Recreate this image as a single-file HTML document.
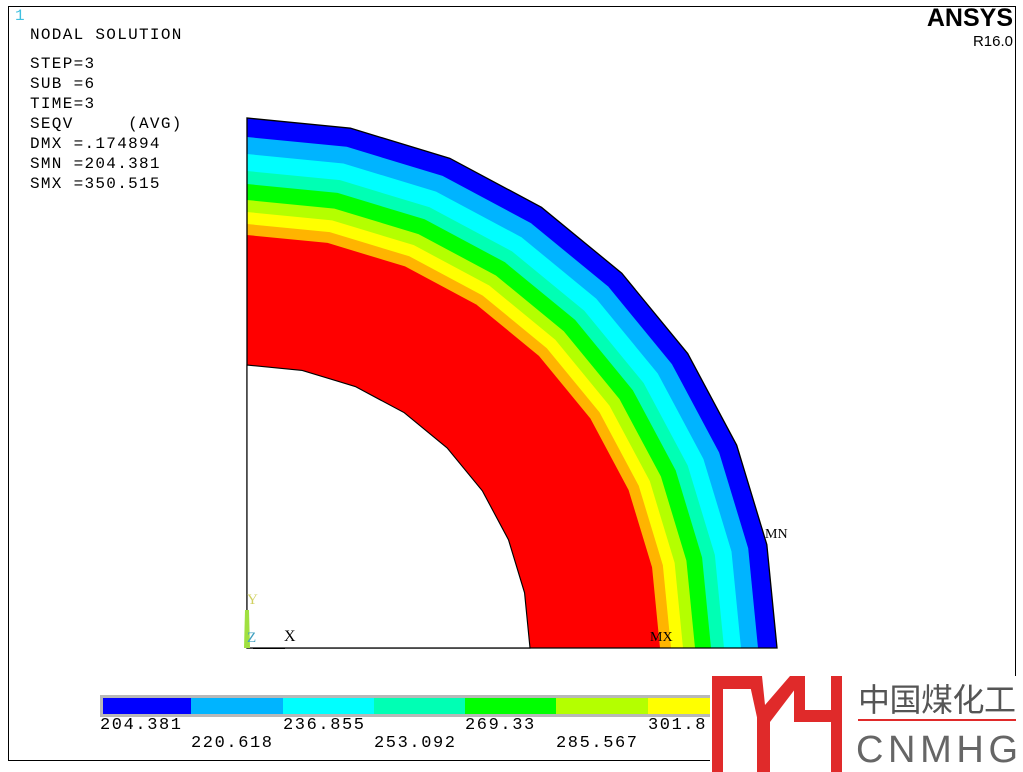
<!DOCTYPE html>
<html><head><meta charset="utf-8"><style>
html,body{margin:0;padding:0;background:#fff;width:1023px;height:772px;overflow:hidden;position:relative}
.t{position:absolute;font-family:"Liberation Mono",monospace;font-size:16px;letter-spacing:1.3px;color:#000;white-space:pre;line-height:20px}
.l{position:absolute;font-family:"Liberation Mono",monospace;font-size:17px;letter-spacing:1.6px;color:#000;white-space:pre}
</style></head><body>
<svg width="1023" height="772" style="position:absolute;left:0;top:0">
<defs>
<polygon id="q" points="0,0 1,0 .9808,-.1951 .9239,-.3827 .8315,-.5556 .7071,-.7071 .5556,-.8315 .3827,-.9239 .1951,-.9808 0,-1"/>
</defs>
<rect x="8.5" y="6.5" width="1007" height="754" fill="none" stroke="#000" stroke-width="1"/>
<g transform="translate(247,648)">
<use href="#q" transform="scale(530)" fill="#0000ff"/>
<use href="#q" transform="scale(511)" fill="#00b4ff"/>
<use href="#q" transform="scale(494)" fill="#00ffff"/>
<use href="#q" transform="scale(477)" fill="#00ffb4"/>
<use href="#q" transform="scale(464)" fill="#00ff00"/>
<use href="#q" transform="scale(448)" fill="#b4ff00"/>
<use href="#q" transform="scale(436)" fill="#ffff00"/>
<use href="#q" transform="scale(424)" fill="#ffb400"/>
<use href="#q" transform="scale(413)" fill="#ff0000"/>
<use href="#q" transform="scale(530)" fill="none" stroke="#000" stroke-width="0.0025"/>
<use href="#q" transform="scale(283)" fill="#fff" stroke="#000" stroke-width="0.004"/>
</g>
<polygon points="245,610 249,610 250,648 244,648" fill="#a0e040"/>
<line x1="253" y1="648.5" x2="285" y2="648.5" stroke="#000"/>
<rect x="100" y="695" width="640" height="22" fill="#b8b8b8"/>
<rect x="103" y="698" width="88" height="16" fill="#0000ff"/>
<rect x="191" y="698" width="92" height="16" fill="#00b4ff"/>
<rect x="283" y="698" width="91" height="16" fill="#00ffff"/>
<rect x="374" y="698" width="91" height="16" fill="#00ffb4"/>
<rect x="465" y="698" width="91" height="16" fill="#00ff00"/>
<rect x="556" y="698" width="92" height="16" fill="#b4ff00"/>
<rect x="648" y="698" width="92" height="16" fill="#ffff00"/>
<rect x="710" y="676" width="313" height="96" fill="#fff"/>
<g fill="#e02a2a">
<rect x="712" y="676" width="11" height="96"/>
<rect x="712" y="676" width="48" height="13"/>
<polygon points="748,676 762,676 765,705 790,676 805,676 770,722 758,722"/>
<rect x="757" y="715" width="13" height="57"/>
<rect x="794" y="676" width="11" height="46"/>
<rect x="794" y="710" width="48" height="12"/>
<rect x="831" y="676" width="11" height="96"/>
<rect x="858" y="719" width="158" height="2"/>
</g>
<text x="858" y="711" font-family="'Noto Sans CJK SC',sans-serif" font-size="32" fill="#555" textLength="158">中国煤化工</text>
<text x="856" y="762" font-family="'Liberation Sans',sans-serif" font-size="38" fill="#666" textLength="162" lengthAdjust="spacing">CNMHG</text>
</svg>
<div class="t" style="left:15px;top:6px;color:#40c0e0">1</div>
<div class="t" style="left:30px;top:25px">NODAL SOLUTION</div>
<div class="t" style="left:30px;top:54px">STEP=3
SUB =6
TIME=3
SEQV     (AVG)
DMX =.174894
SMN =204.381
SMX =350.515</div>
<div style="position:absolute;right:10px;top:4px;font-family:'Liberation Sans',sans-serif;font-weight:bold;font-size:25px;color:#000">ANSYS</div>
<div style="position:absolute;right:10px;top:33px;font-family:'Liberation Sans',sans-serif;font-size:15px;color:#000">R16.0</div>
<div class="t" style="left:765px;top:525px;font-family:'Liberation Serif',serif;font-size:14px;letter-spacing:0">MN</div>
<div class="t" style="left:650px;top:628px;font-family:'Liberation Serif',serif;font-size:14px;letter-spacing:0">MX</div>
<div class="t" style="left:247px;top:590px;font-family:'Liberation Serif',serif;font-size:15px;color:#d0d060;letter-spacing:0">Y</div>
<div class="t" style="left:247px;top:628px;font-family:'Liberation Serif',serif;font-size:15px;color:#40a0c0;letter-spacing:0">Z</div>
<div class="t" style="left:284px;top:627px;font-family:'Liberation Serif',serif;font-size:16px;letter-spacing:0">X</div>
<div class="l" style="left:100px;top:716px">204.381</div>
<div class="l" style="left:191px;top:734px">220.618</div>
<div class="l" style="left:283px;top:716px">236.855</div>
<div class="l" style="left:374px;top:734px">253.092</div>
<div class="l" style="left:465px;top:716px">269.33</div>
<div class="l" style="left:556px;top:734px">285.567</div>
<div class="l" style="left:648px;top:716px">301.8</div>
</body></html>
